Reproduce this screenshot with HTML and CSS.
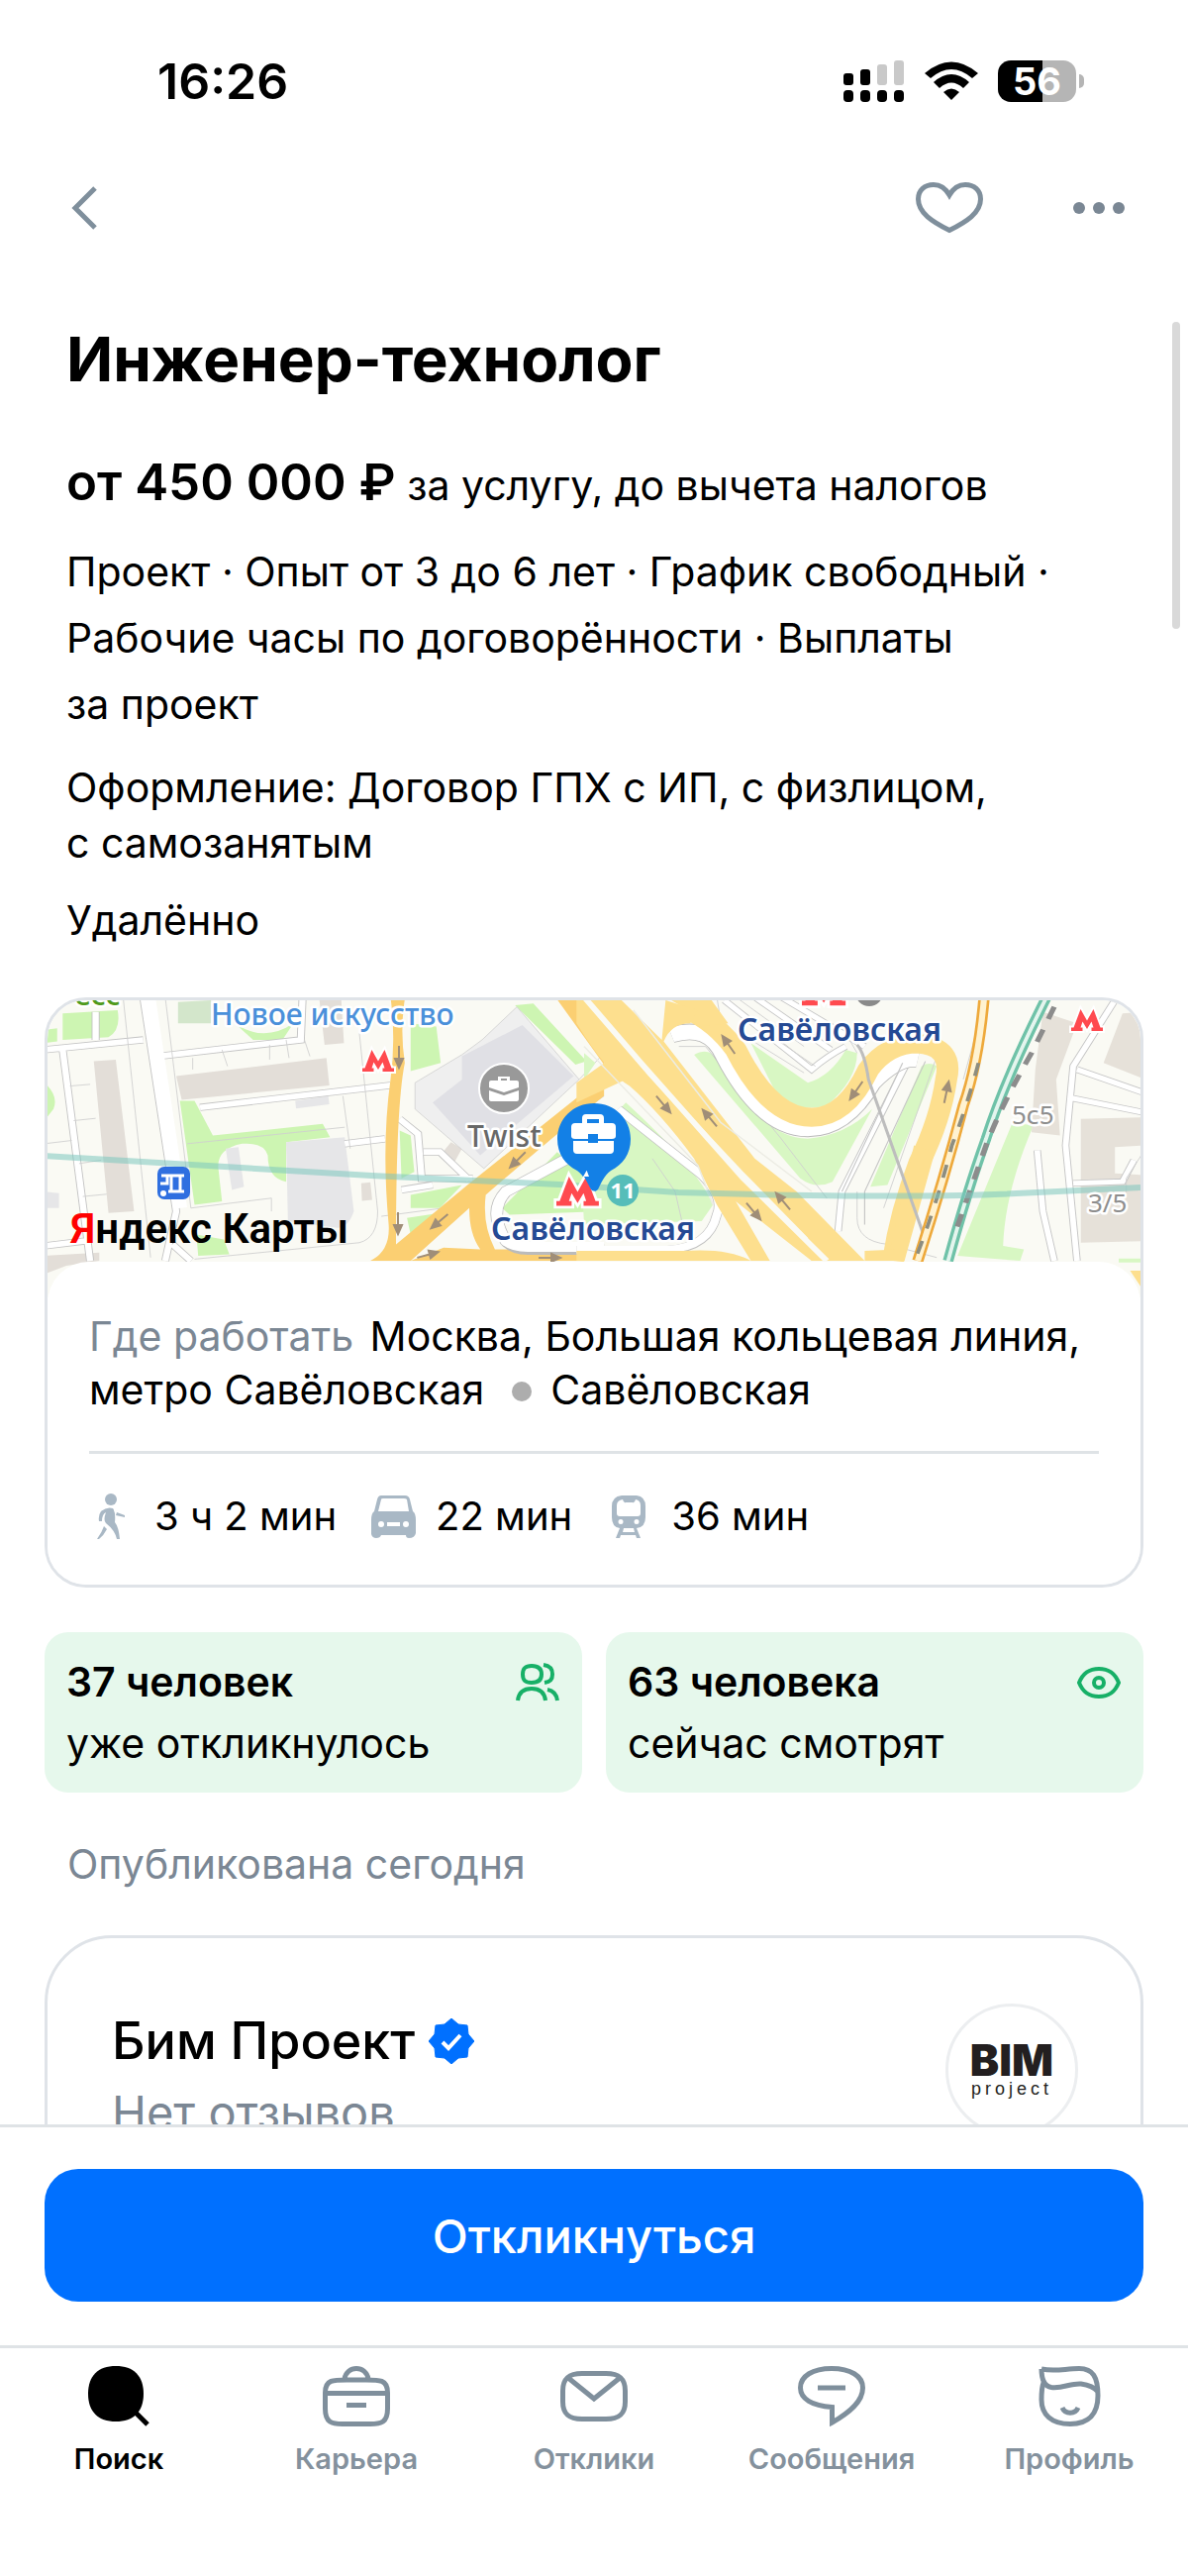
FILE: index.html
```
<!DOCTYPE html>
<html lang="ru">
<head>
  <meta charset="UTF-8">
  <meta name="viewport" content="width=device-width, initial-scale=1.0">
  <title>Инженер-технолог</title>
  <link rel="stylesheet" href="styles.css">
</head>
<body>
  <div class="status">
    <span class="time">16:26</span>
    <div class="status-icons">
      <svg width="62" height="42" viewBox="0 0 62 42">
        <g fill="#c9c9c9"><rect x="34" y="4" width="10" height="21" rx="3"/><rect x="51" y="0" width="10" height="25" rx="3"/></g>
        <rect x="0" y="13" width="10" height="12" rx="3"/><rect x="17" y="9" width="10" height="16" rx="3"/>
        <rect x="0" y="30" width="10" height="12" rx="4"/><rect x="17" y="30" width="10" height="12" rx="4"/><rect x="34" y="30" width="10" height="12" rx="4"/><rect x="51" y="30" width="10" height="12" rx="4"/>
      </svg>
      <svg width="54" height="40" viewBox="0 0 54 40">
        <path d="M0 12Q27 -11 54 12L48 17Q27 -1 6 17Z"/>
        <path d="M9 21Q27 5 45 21L39 27Q27 16 15 27Z"/>
        <path d="M19 31Q27 24 35 31L27 39Z"/>
      </svg>
      <div class="battery"><span>56</span></div>
    </div>
  </div>

  <header class="header">
    <button aria-label="Назад"><svg width="30" height="46" viewBox="0 0 30 46"><path d="M28 3L8 23L28 43" class="line"/></svg></button>
    <div class="actions">
      <button aria-label="В избранное"><svg width="68" height="52" viewBox="0 0 68 52"><path d="M34 13C30 6 25 2.500 18 2.500C9 2.500 2.500 8 2.500 17C2.500 31 17 40 34 48.500C51 40 65.500 31 65.500 17C65.500 8 59 2.500 50 2.500C43 2.500 38 6 34 13Z" class="line"/></svg></button>
      <button aria-label="Ещё"><svg width="52" height="14" viewBox="0 0 52 14"><g fill="#7a8794"><circle cx="6" cy="7" r="6"/><circle cx="26" cy="7" r="6"/><circle cx="46" cy="7" r="6"/></g></svg></button>
    </div>
  </header>

  <main class="content">
    <section class="info">
      <h1>Инженер-технолог</h1>
      <p class="salary"><b>от 450 000 ₽</b> за услугу, до вычета налогов</p>
      <p class="terms">Проект · Опыт от 3 до 6 лет · График свободный · Рабочие часы по договорённости · Выплаты за&nbsp;проект</p>
      <p>Оформление: Договор ГПХ с ИП, с физлицом, с&nbsp;самозанятым</p>
      <p>Удалённо</p>
    </section>

    <section class="place">
      <svg class="map" viewBox="3 3 1104 300" preserveAspectRatio="xMidYMin slice">
        <defs>
          <path id="metro" d="M0 22V18.500H2.500L9.500 0L16 11.500L22.500 0L29.500 18.500H32V22H20.500V18.500H22.500L20.500 12.500L16 20L11.500 12.500L9.500 18.500H11.500V22Z" fill="#ff4a4f" stroke="#fff" stroke-width="4" paint-order="stroke"/>
          <path id="arrow" d="M-11 0H3M2 -4L11 0L2 4Z" fill="#a08e78" stroke="#a08e78" stroke-width="2"/>
        </defs>
        <rect width="1110" height="310" fill="#fafaf4"/>

        <!-- west part -->
        <g transform="translate(-15 -17) scale(.37 .333)">
          <g fill="#cdf5b2">
            <path d="M90 100L240 90Q250 150 215 172L90 180ZM40 150L75 145V185L40 190ZM40 310Q80 350 65 390L40 425Z"/>
            <path d="M1040 130L1110 140L1122 250L1040 275ZM560 130Q640 190 720 130L690 180L610 180ZM1325 75L1375 70L1520 245L1490 255Z"/>
            <path d="M410 365L450 365L500 470L800 435L820 475L700 490V610Q650 600 650 530Q640 490 580 495Q510 510 515 570L525 670L450 680Z"/>
            <path d="M1010 455L1040 470L1050 580L1015 600ZM1040 650L1180 620L1120 690L1040 690ZM1030 720L1120 705L1040 770ZM455 770L530 785L545 830L460 835ZM1290 690L1440 520L1568 640V700L1310 710Z"/>
          </g>
          <g fill="#e3ded8">
            <path d="M175 245L235 240L285 700L215 705ZM400 290L810 235L818 318L415 362ZM790 50L850 50L858 190L805 195ZM40 835L190 825V850L100 865L40 890ZM905 615L930 612L935 665L907 668ZM1150 490L1180 510L1160 550L1128 520Z"/>
          </g>
          <path d="M405 65L495 60V130H405Z" fill="#d3e6cb"/>
          <path d="M1330 80L1500 300L1240 570L1052 390V310L1180 225L1235 180Z" fill="#efefef" stroke="#cacaca" stroke-width="2"/>
          <path d="M1345 135L1485 290L1230 530L1100 370L1180 300V230Z" fill="#e0e0e5"/>
          <path d="M700 490L860 475L885 700Q870 750 840 750L705 730ZM535 510L570 505L585 625L552 635ZM725 365L815 350L818 375L727 388ZM40 640L80 645V690H40Z" fill="#e6e6e8"/>
          <g fill="none" stroke="#c4c4c4" stroke-width="22">
            <path d="M310 50L400 700L370 850M90 210L165 850M40 210L310 180M350 230L740 180L745 50M465 385L985 318M180 95V180M1010 420L1060 465L1070 600L1210 600M1075 520L1120 520L1200 605M1015 635L1100 620M860 495L970 480M390 800L440 850M40 805L150 790"/>
          </g>
          <g fill="none" stroke="#fff" stroke-width="17">
            <path d="M310 50L400 700L370 850M90 210L165 850M40 210L310 180M350 230L740 180L745 50M465 385L985 318M180 95V180M1010 420L1060 465L1070 600L1210 600M1075 520L1120 520L1200 605M1015 635L1100 620M860 495L970 480M390 800L440 850M40 805L150 790"/>
          </g>
          <path d="M325 50L412 690" fill="none" stroke="#fff" stroke-width="36"/>
          <g fill="none" stroke="#cfcfcf" stroke-width="2.500">
            <path d="M255 50L330 840M370 50L440 690L660 660V700M40 495L115 485M110 320L165 315M120 425L180 418M135 555L195 545M145 655L210 648M445 235V270M525 210L540 260M655 195V240M700 180L708 235M750 180L765 230M430 495L860 445M855 350L875 510M900 160L950 700Q950 780 900 795L450 845M960 715L1130 690L1568 350M1500 300L1568 220"/>
          </g>
          <path d="M1435 50L1568 255V50ZM985 50H1025Q1010 150 1024 250Q1000 380 1000 800L1195 620L1568 290V350Q1400 500 1245 650Q1235 740 1270 815H1568V850H930Q985 820 980 740Q960 500 985 300Q1000 180 985 50Z" fill="#fbcf72"/>
          <path d="M1040 850L1200 690Q1200 770 1230 815L1130 810Z" fill="#fafaf4"/>
          <path d="M1568 480L1300 640Q1250 700 1300 790Q1320 815 1360 815H1568" fill="none" stroke="#bbb" stroke-width="34"/>
          <path d="M1568 480L1300 640Q1250 700 1300 790Q1320 808 1360 808H1568" fill="none" stroke="#fff" stroke-width="30"/>
        </g>

        <!-- east part -->
        <g transform="translate(545 -17) scale(.383 .333)">
          <g fill="#d8f7c3">
            <path d="M-10 520L110 370Q300 570 340 680L310 730L0 740ZM290 225Q330 200 350 240Q470 480 590 480Q690 470 760 390L655 610Q610 635 570 600Z"/>
            <path d="M440 190L590 310Q650 290 690 210L720 220Q720 300 640 380Q560 400 510 350ZM890 260Q910 245 930 260L800 620L755 625ZM1130 430L1185 440Q1110 640 1105 805L1160 815L1150 850L985 835Z"/>
            <path d="M0 220L30 250L0 300ZM1410 843H1475V855H1410Z"/>
          </g>
          <g fill="#e6e1d9">
            <path d="M1210 95L1300 130L1245 300L1255 470L1180 460L1190 270ZM1420 100L1480 95V300L1370 250ZM1310 420L1480 415V500L1400 505V585L1480 590V790L1310 795Z"/>
          </g>
          <g fill="none" stroke="#c6c6c6" stroke-width="20">
            <path d="M1400 60L1290 260L1270 500L1300 850M1300 270L1475 340M1280 355L1475 400M1290 615L1420 610L1450 545M1195 515L1210 700L1240 850M370 60L600 270Q640 230 690 200M450 50L650 210M520 50L740 200M860 230L680 640L670 760"/>
          </g>
          <g fill="none" stroke="#fff" stroke-width="15">
            <path d="M1400 60L1290 260L1270 500L1300 850M1300 270L1475 340M1280 355L1475 400M1290 615L1420 610L1450 545M1195 515L1210 700L1240 850M370 60L600 270Q640 230 690 200M450 50L650 210M520 50L740 200M860 230L680 640L670 760"/>
          </g>
          <path d="M-20 818H220Q330 810 350 710Q370 660 310 590L90 390" fill="none" stroke="#c2c2c2" stroke-width="26"/>
          <path d="M-20 816H220Q330 808 350 710Q370 660 310 590L90 390" fill="none" stroke="#fff" stroke-width="22"/>
          <g fill="none" stroke="#cfcfcf" stroke-width="2.500">
            <path d="M400 50L580 200M470 150L610 260M350 50L360 120M440 180L580 280M250 200L320 200L520 480L640 660M700 180L720 220M720 640V720Q720 790 800 800L930 840M930 230L790 690M1060 50L1000 300M180 540L240 640L260 740M1475 520L1430 600V660"/>
          </g>
          <!-- ramp loop -->
          <path d="M230 165Q330 130 370 230Q470 450 590 450Q690 450 760 310Q830 230 880 240" fill="none" stroke="#b9b9b9" stroke-width="50"/>
          <path d="M230 165Q330 130 370 230Q470 450 590 450Q690 450 760 310Q830 230 880 240" fill="none" stroke="#fff" stroke-width="45"/>
          <path d="M275 90Q350 130 400 210Q490 415 600 415Q690 415 750 270Q800 192 880 192Q975 200 955 300Q940 420 885 550Q835 700 815 850" fill="none" stroke="#fddf8e" stroke-width="58"/>
          <path d="M275 90L215 50H330L380 130L300 140Z" fill="#fddf8e"/>
          <path d="M845 620L870 500L925 520L845 850H800Z" fill="#fddf8e"/>
          <g fill="#fddf8e">
            <path d="M-20 50H-5L170 290L420 600L640 850H600L400 670L490 850H440L350 680L290 540Q200 400 120 320Q60 280 -20 130Z"/>
            <path d="M10 50H90L205 180L215 60L300 90L280 130Q230 130 210 185L450 540L560 640L740 850H600L590 780L420 580L150 250Z"/>
            <path d="M-20 310L65 240L110 300L-20 370ZM-20 820H260Q380 810 440 850H-20ZM1440 880H1475V940ZM740 820L830 815V850H740Z"/>
          </g>
          <path d="M0 50L150 250L420 600L640 850" fill="none" stroke="#fafaf4" stroke-width="16"/>
          <path d="M0 200L300 560L340 680M130 90L360 430L600 640" fill="none" stroke="#ecece4" stroke-width="4"/>
          <path d="M840 250L680 640M900 245L740 640V740" fill="none" stroke="#c6c6c6" stroke-width="3"/>
          <path d="M720 195Q740 220 750 300L895 770" fill="none" stroke="#bdbdbd" stroke-width="8"/>
          <path d="M1055 50Q1040 250 1000 380Q950 600 880 850" fill="none" stroke="#eea93b" stroke-width="30"/>
          <path d="M1055 50Q1040 250 1000 380Q950 600 880 850" fill="none" stroke="#fff2d0" stroke-width="16"/>
          <path d="M1040 250Q1010 380 970 500Q930 680 872 850" fill="none" stroke="#8d8d80" stroke-width="10" stroke-dasharray="40 40"/>
          <path d="M1220 50Q1110 300 1060 480Q1010 640 960 850" fill="none" stroke="#6fc2a8" stroke-width="28"/>
          <path d="M1220 50Q1110 300 1060 480Q1010 640 960 850" fill="none" stroke="#e4f5ee" stroke-width="10"/>
          <path d="M1240 80L1180 220Q1100 380 1060 500L980 760" fill="none" stroke="#8c8c8c" stroke-width="14" stroke-dasharray="40 35"/>
        </g>
        <path d="M0 160L330 180L520 189L640 197Q850 203 960 199L1107 192" fill="none" stroke="#7cc7be" stroke-opacity=".55" stroke-width="6"/>

        <g>
          <use href="#arrow" transform="translate(358 60) rotate(90)"/>
          <use href="#arrow" transform="translate(357 228) rotate(90)"/>
          <use href="#arrow" transform="translate(478 164) rotate(135)"/>
          <use href="#arrow" transform="translate(399 226) rotate(140)"/>
          <use href="#arrow" transform="translate(387 260) rotate(-15)"/>
          <use href="#arrow" transform="translate(510 263)"/>
          <use href="#arrow" transform="translate(625 108) rotate(50)"/>
          <use href="#arrow" transform="translate(672 122) rotate(-130)"/>
          <use href="#arrow" transform="translate(691 48) rotate(-125)"/>
          <use href="#arrow" transform="translate(820 94) rotate(125)"/>
          <use href="#arrow" transform="translate(911 96) rotate(-78)"/>
          <use href="#arrow" transform="translate(716 216) rotate(50)"/>
          <use href="#arrow" transform="translate(746 206) rotate(-130)"/>
        </g>

        <text x="30" y="8" class="map-label green">есс</text>
        <text x="168" y="28" class="map-label blue">Новое искусство</text>
        <text x="700" y="44" class="map-label station">Савёловская</text>
        <text x="977" y="128" class="map-label house">5с5</text>
        <text x="1054" y="217" class="map-label house">3/5</text>
        <text x="427" y="151" class="map-label shop">Twist</text>

        <use href="#metro" transform="translate(321 53)"/>
        <use href="#metro" transform="translate(1037 12)"/>
        <use href="#metro" transform="translate(765 -22) scale(1.380)"/>
        <circle cx="833" cy="-5" r="14" fill="#8a8a8a"/>

        <rect x="114" y="171" width="33" height="33" rx="7" fill="#2f6fe0"/>
        <path d="M118 180H141M124 180V188H117M128 180V196M137 180V196M125 196H141" fill="none" stroke="#fff" stroke-width="3"/>
        <circle cx="120" cy="198" r="3" fill="#fff"/>

        <circle cx="464" cy="92" r="25" fill="#999" stroke="#fff" stroke-width="2"/>
        <path d="M449 86Q449 84 451 84H477Q479 84 479 86V91L464 96L449 91ZM449 94L464 99L479 94V103Q479 105 477 105H451Q449 105 449 103ZM458 84V80H470V84H467V82H461V84Z" fill="#fff"/>

        <circle cx="584" cy="195" r="16" fill="#56bdb9"/>
        <text x="584" y="203" class="line-number">11</text>
        <path d="M555 107C576 107 592 123 592 143C592 158 584 169 572 175C565 180 562 188 559 194Q555 198 551 194C548 188 545 180 538 175C526 169 518 158 518 143C518 123 534 107 555 107Z" fill="#1380e6"/>
        <path d="M543 127V122Q543 118 547 118H561Q565 118 565 122V127H573Q577 127 577 131V140Q577 143 573 143H559V138H549V143H536Q532 143 532 140V131Q532 127 536 127ZM548 127H560V123H548ZM534 145H549V147H559V145H575V154Q575 158 571 158H538Q534 158 534 154Z" fill="#fff" fill-rule="evenodd"/>
        <use href="#metro" transform="translate(517 181) scale(1.340)"/>
        <path d="M545 181L565 181L558 194Q555 197 552 194Z" fill="#1380e6"/>
        <text x="451" y="245" class="map-label station">Савёловская</text>
        <text x="26" y="248" class="map-logo"><tspan fill="#f00">Я</tspan>ндекс Карты</text>
      </svg>
      <div class="place-body">
        <p class="address"><span class="muted">Где работать</span> Москва, Большая кольцевая линия, метро Савёловская <i class="dot"></i> Савёловская</p>
        <ul class="travel">
          <li>
            <svg width="46" height="46" viewBox="0 0 46 46" fill="#a9b8c5"><circle cx="22" cy="6" r="6"/><path d="M12 18Q18 13 24 15Q27 19 26 29Q30 34 31 46H28Q26 37 17 30Q14 27 17 19Q13 21 13 28H10Q9 22 12 18ZM28 19L36 22V24L27 22ZM15 33L18 36Q15 42 10 46H8Q13 39 15 33Z"/></svg>
            3 ч 2 мин
          </li>
          <li>
            <svg width="46" height="46" viewBox="0 0 46 46" fill="#a9b8c5"><path fill-rule="evenodd" d="M11 2H35Q39 2 40 6L43 18Q46 20 46 27V40Q45 45 39 45Q36 45 36 42H11Q10 45 6 45Q2 45 1 41V27Q1 20 4 18L7 6Q8 2 11 2ZM11 6L8 18H39L37 6Q36 5 34 5H13Q11 5 11 6ZM11 28A3 3 0 1 0 11 34A3 3 0 1 0 11 28ZM36 28A3 3 0 1 0 36 34A3 3 0 1 0 36 28ZM17 29V33H30V29Z"/></svg>
            22 мин
          </li>
          <li>
            <svg width="46" height="46" viewBox="0 0 46 46" fill="#a9b8c5"><path fill-rule="evenodd" d="M16 2H31Q40 3 40 13V24Q40 34 31 35L35 45H31L30 42H15L14 45H10L14 35Q6 34 6 24V13Q6 3 16 2ZM17 6Q18 10 20 9H27Q29 10 30 6Q35 7 35 12V20Q35 23 32 23H14Q11 23 11 20V12Q11 7 17 6ZM15 26A2.500 2.500 0 1 0 15 31A2.500 2.500 0 1 0 15 26ZM31 26A2.500 2.500 0 1 0 31 31A2.500 2.500 0 1 0 31 26ZM18 35L17 39H29L28 35Z"/></svg>
            36 мин
          </li>
        </ul>
      </div>
    </section>

    <section class="counters">
      <div class="counter">
        <p><b>37 человек</b><br>уже откликнулось</p>
        <svg width="46" height="40" viewBox="0 0 46 40"><path d="M17 3C24 3 27 6 27 11.500C27 17 24 20 17 20C10 20 8 17 8 11.500C8 6 10 3 17 3ZM29 2C36 3 38 6 38 11.500C38 17 36 19 30 20M3 38C4 30 9 26 17 26C25 26 30 30 31 38M33 27C39 28 42 31 43 38" class="green-line"/></svg>
      </div>
      <div class="counter">
        <p><b>63 человека</b><br>сейчас смотрят</p>
        <svg width="46" height="40" viewBox="0 0 46 40"><path d="M3 20C7 10 13 6 23 6C33 6 39 10 43 20C39 30 33 34 23 34C13 34 7 30 3 20Z" class="green-line"/><circle cx="23" cy="20" r="5" class="green-line"/></svg>
      </div>
    </section>

    <p class="published">Опубликована сегодня</p>

    <section class="company">
      <div>
        <h2>Бим Проект
          <svg width="46" height="46" viewBox="0 0 46 46"><path d="M23 0L30 6L39 7L40 16L46 23L40 30L39 39L30 40L23 46L16 40L7 39L6 30L0 23L6 16L7 7L16 6Z" fill="#0070ff" stroke="#0070ff" stroke-linejoin="round"/><path d="M14 24L20 30L32 17" fill="none" stroke="#fff" stroke-width="4"/></svg>
        </h2>
        <p class="reviews">Нет отзывов</p>
      </div>
      <div class="company-logo"><b>BIM</b><span>project</span></div>
    </section>
    <div class="scroll-thumb"></div>
  </main>

  <div class="apply">
    <button>Откликнуться</button>
  </div>

  <nav class="tabs">
    <a href="#" class="active"><svg width="68" height="62" viewBox="0 0 68 62"><path d="M31 0C49 0 59 10 59 28C59 46 49 56 31 56C13 56 3 46 3 28C3 10 13 0 31 0Z"/><path d="M49 45L63 59" fill="none" stroke="#000" stroke-width="5"/></svg>Поиск</a>
    <a href="#"><svg width="68" height="62" viewBox="0 0 68 62"><path d="M34 14C56 14 65.500 12 65.500 27V43C65.500 57 59 58.500 48 58.500H20C9 58.500 2.500 57 2.500 43V27C2.500 12 12 14 34 14ZM22 13C24 -1 44 -1 46 13M3 27.500H65M24 39.500H44" class="line"/></svg>Карьера</a>
    <a href="#"><svg width="68" height="62" viewBox="0 0 68 62"><path d="M22 7.500H46C59 7.500 65.500 12 65.500 25V36C65.500 49 59 53.500 46 53.500H22C9 53.500 2.500 49 2.500 36V25C2.500 12 9 7.500 22 7.500ZM8 12L34 33L60 12" class="line"/></svg>Отклики</a>
    <a href="#"><svg width="68" height="62" viewBox="0 0 68 62"><path d="M34.500 57V41.500C14 40 2.500 33 2.500 22C2.500 10 15 2.500 34 2.500C53 2.500 65.500 10 65.500 22C65.500 36 52 47 34.500 57ZM20 22H48" class="line"/></svg>Сообщения</a>
    <a href="#"><svg width="68" height="62" viewBox="0 0 68 62"><path d="M6 3C20 6 30 2.500 44 2.500C58 2.500 63 11 63 30C63 48 54 58.500 35 58.500C16 58.500 6 49 6 34C6 27 6 22 8 17M6 3C6 10 7 20 16 21.500C27 23 36 17 46 18C54 19 59 21 63 26M27 42C30 49 40 49 43 42" class="line"/></svg>Профиль</a>
  </nav>
</body>
</html>
```
FILE: styles.css
```
* {
  margin: 0;
  padding: 0;
  box-sizing: border-box;
}
body {
  height: 100vh;
  display: flex;
  flex-direction: column;
  background: #fff;
  color: #000;
  font-family: Inter, Arial, sans-serif;
  font-size: 41px;
  line-height: 56px;
}
svg {
  display: block;
  flex: none;
}
button {
  border: none;
  background: none;
  font-family: inherit;
  cursor: pointer;
}
b {
  font-weight: 600;
}
.line {
  fill: none;
  stroke: #7f8f9c;
  stroke-width: 5;
}
.green-line {
  fill: none;
  stroke: #17b067;
  stroke-width: 4;
}

/* status bar */
.status {
  height: 164px;
  padding: 0 105px 0 159px;
  display: flex;
  justify-content: space-between;
  align-items: center;
  flex: none;
}
.time {
  font-size: 50px;
  font-weight: 600;
}
.status-icons {
  display: flex;
  align-items: center;
  gap: 20px;
}
.battery {
  position: relative;
  width: 79px;
  height: 42px;
  margin-right: 8px;
  border-radius: 13px;
  background: linear-gradient(to right, #000 57%, #b5b5b5 57%);
  color: #fff;
  font-size: 38px;
  font-weight: 700;
  line-height: 42px;
  text-align: center;
}
.battery::after {
  content: "";
  position: absolute;
  right: -8px;
  top: 14px;
  width: 5px;
  height: 14px;
  border-radius: 0 5px 5px 0;
  background: #b5b5b5;
}

.header {
  height: 92px;
  padding: 0 64px 0 68px;
  display: flex;
  justify-content: space-between;
  align-items: center;
  flex: none;
}
.actions {
  display: flex;
  align-items: center;
  gap: 91px;
}

/* scrolling part */
.content {
  position: relative;
  flex: 1;
  min-height: 0;
  padding: 71px 45px 0;
  overflow: hidden;
}
.scroll-thumb {
  position: absolute;
  top: 69px;
  right: 8px;
  width: 8px;
  height: 310px;
  border-radius: 4px;
  background: #d9d9d9;
}
.info {
  padding: 0 22px;
  display: flex;
  flex-direction: column;
  gap: 22px;
}
h1 {
  margin-bottom: 34px;
  font-size: 62px;
  font-weight: 700;
  line-height: 72px;
}
.salary {
  line-height: 64px;
}
.salary b {
  font-size: 51px;
}
.terms {
  line-height: 67px;
}

.place {
  margin-top: 50px;
  border: 3px solid #dfe3e8;
  border-radius: 42px;
  overflow: hidden;
}
.map {
  width: 100%;
  height: 300px;
}
.map-label {
  font-family: "Noto Sans", sans-serif;
  font-size: 30px;
  font-weight: 500;
  stroke: #fff;
  stroke-width: 5px;
  stroke-linejoin: round;
  paint-order: stroke;
}
.blue { fill: #4a90da; }
.green { fill: #4f9a1c; }
.station {
  fill: #254a94;
  font-size: 32px;
  font-weight: 600;
}
.house {
  fill: #8e8e8e;
  font-size: 26px;
  font-weight: 400;
}
.shop {
  fill: #686868;
}
.line-number {
  fill: #fff;
  font: 700 22px "Noto Sans", sans-serif;
  text-anchor: middle;
}
.map-logo {
  font: 600 42px Roboto, sans-serif;
}
.place-body {
  position: relative;
  margin-top: -36px;
  padding: 48px 42px 42px;
  border-radius: 42px 42px 0 0;
  background: #fff;
}
.address {
  padding-bottom: 35px;
  border-bottom: 3px solid #dfe3e6;
  line-height: 54px;
}
.muted {
  margin-right: 5px;
  color: #7b8794;
}
.dot {
  display: inline-block;
  width: 20px;
  height: 20px;
  margin: 0 8px 3px 16px;
  border-radius: 50%;
  background: #adadad;
}
.travel {
  padding-top: 36px;
  display: flex;
  gap: 34px;
  list-style: none;
  font-size: 40px;
  line-height: 54px;
}
.travel li {
  display: flex;
  align-items: center;
  gap: 20px;
}

.counters {
  margin-top: 45px;
  display: grid;
  grid-template-columns: 1fr 1fr;
  gap: 24px;
}
.counter {
  padding: 19px 22px;
  display: flex;
  justify-content: space-between;
  border-radius: 24px;
  background: #e6f8ec;
  line-height: 62px;
}
.counter svg {
  margin-top: 12px;
}
.published {
  padding: 44px 23px;
  color: #7b8794;
}

.company {
  height: 300px;
  padding: 72px 63px 0 65px;
  display: flex;
  justify-content: space-between;
  border: 3px solid #dfe3e8;
  border-radius: 68px;
}
h2 {
  display: flex;
  align-items: center;
  gap: 14px;
  font-size: 52px;
  font-weight: 500;
  line-height: 64px;
}
.reviews {
  margin-top: 12px;
  color: #7b8794;
  font-size: 47px;
}
.company-logo {
  width: 134px;
  height: 134px;
  margin-top: -6px;
  display: flex;
  flex-direction: column;
  align-items: center;
  justify-content: center;
  border: 3px solid #eceef0;
  border-radius: 50%;
  color: #231f20;
}
.company-logo b {
  font-size: 44px;
  font-weight: 900;
  line-height: 38px;
}
.company-logo span {
  font-family: "Liberation Sans", Arial, sans-serif;
  font-size: 18px;
  line-height: 20px;
  letter-spacing: 4px;
}

/* bottom */
.apply {
  padding: 42px 45px 44px;
  border-top: 3px solid #dfe3e6;
  flex: none;
}
.apply button {
  width: 100%;
  height: 134px;
  border-radius: 34px;
  background: #0070ff;
  color: #fff;
  font-size: 47px;
  font-weight: 500;
}
.tabs {
  padding: 18px 0 100px;
  display: grid;
  grid-template-columns: repeat(5, 1fr);
  border-top: 3px solid #dfe3e6;
  flex: none;
}
.tabs a {
  display: flex;
  flex-direction: column;
  align-items: center;
  gap: 14px;
  color: #84919d;
  font-size: 29px;
  font-weight: 600;
  line-height: 36px;
  text-decoration: none;
}
.tabs .active {
  color: #000;
}
```
